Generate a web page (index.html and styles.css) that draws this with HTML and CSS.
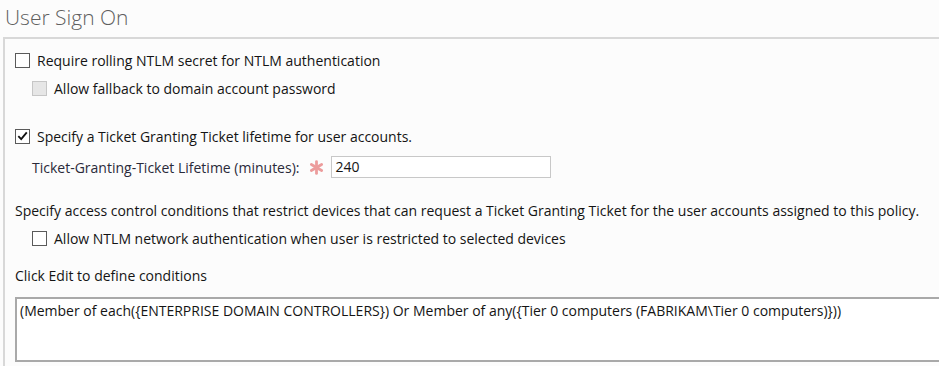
FILE: index.html
```html
<!DOCTYPE html>
<html lang="en">
<head>
    <meta charset="UTF-8">
    <title>User Sign On</title>
    <link rel="stylesheet" href="styles.css">
</head>
<body>

    <!-- Section header -->
    <h1 class="title">User Sign On</h1>

    <div class="section">
        <label class="check-row">
            <span class="box"></span>
            Require rolling NTLM secret for NTLM authentication
        </label>
        <label class="check-row indent disabled">
            <span class="box"></span>
            Allow fallback to domain account password
        </label>

        <label class="check-row tgt-row">
            <span class="box checked">
                <svg viewBox="0 0 14 14" width="14" height="14"><path d="M2.5 7.2 L5.6 10.3 L11.6 3.2" fill="none" stroke="#111" stroke-width="2"/></svg>
            </span>
            Specify a Ticket Granting Ticket lifetime for user accounts.
        </label>
        <div class="field-row">
            <span class="field-label">Ticket-Granting-Ticket Lifetime (minutes):</span>
            <!-- required marker -->
            <svg class="required" viewBox="0 0 14 14" width="15" height="15">
                <g stroke="#ec9c9c" stroke-width="2.6" stroke-linecap="round">
                    <path d="M7 1.5 V12.5"/>
                    <path d="M2.2 4.2 L11.8 9.8"/>
                    <path d="M2.2 9.8 L11.8 4.2"/>
                </g>
            </svg>
            <span class="input">240</span>
        </div>

        <p class="text access-text">Specify access control conditions that restrict devices that can request a Ticket Granting Ticket for the user accounts assigned to this policy.</p>
        <label class="check-row indent ntlm-row">
            <span class="box"></span>
            Allow NTLM network authentication when user is restricted to selected devices
        </label>

        <p class="text edit-text">Click Edit to define conditions</p>
        <div class="conditions">(Member of each({ENTERPRISE DOMAIN CONTROLLERS}) Or Member of any({Tier 0 computers (FABRIKAM\Tier 0 computers)}))</div>
    </div>

</body>
</html>
```

FILE: styles.css
```css
/* General Styles */
body {
    margin: 0;
    background-color: #fcfcfc;
    font-family: 'Open Sans', sans-serif;
    font-size: 14px;
    color: #141414;
    overflow: hidden;
}

/* Header */
.title {
    margin: 0;
    padding: 4px 5px 6px;
    font-size: 21px;
    font-weight: 300;
    color: #5f5f5f;
    line-height: 27px;
}

/* Group box */
.section {
    margin-left: 3px;
    border-top: 2px solid #d8d8d8;
    border-left: 2px solid #d8d8d8;
    padding: 7px 0 6px 10px;
}

.check-row {
    display: flex;
    align-items: center;
    gap: 7px;
    height: 28px;
}

.check-row.indent {
    margin-left: 17px;
}

.box {
    width: 15px;
    height: 15px;
    box-sizing: border-box;
    border: 1px solid #5a5a5a;
    background-color: #fff;
    display: flex;
    align-items: center;
    justify-content: center;
}

.disabled .box {
    background-color: #e6e6e6;
    border-color: #c6c6c6;
}

.tgt-row {
    margin-top: 20px;
}

.field-row {
    display: flex;
    align-items: center;
    height: 22px;
    margin: 6px 0 0 17px;
}

.field-label {
    color: #2a2a3a;
}

.required {
    margin: 0 7px 0 10px;
}

.input {
    width: 220px;
    height: 22px;
    box-sizing: border-box;
    border: 1px solid #c8c8c8;
    background-color: #fff;
    padding-left: 3px;
    line-height: 20px;
}

.text {
    margin: 0;
    line-height: 22px;
}

.access-text {
    margin-top: 22px;
}

.ntlm-row {
    margin-top: 2px;
}

.edit-text {
    margin-top: 13px;
}

.conditions {
    margin: 10px -12px 0 0;
    height: 65px;
    box-sizing: border-box;
    border: 2px solid #a9a9a9;
    background-color: #fff;
    padding: 2px 3px;
}
```
